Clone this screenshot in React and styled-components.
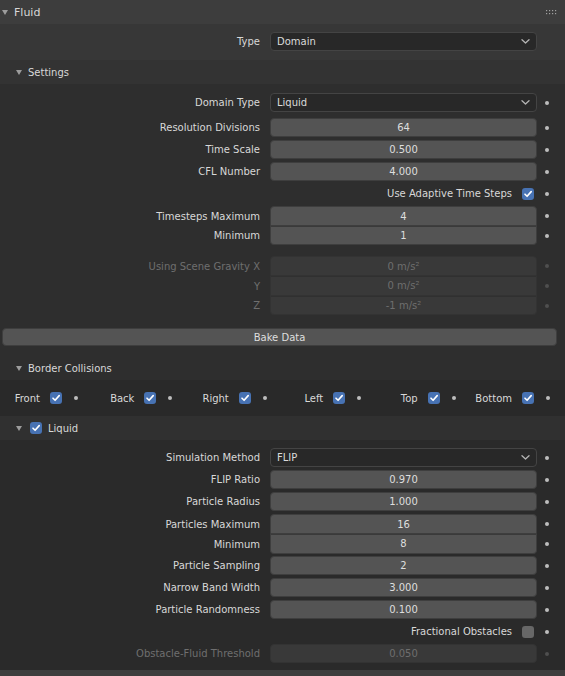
import React from 'react';
import styled, { createGlobalStyle } from 'styled-components';

const Global = createGlobalStyle`
  html, body { margin: 0; padding: 0; background: #2b2b2b; }
  body { font-family: "DejaVu Sans", "Liberation Sans", sans-serif; font-size: 10px; color: #d8d8d8; }
  * { box-sizing: border-box; }
`;

const Panel = styled.div`
  width: 565px;
  height: 676px;
  overflow: hidden;
  display: flex;
  flex-direction: column;
  background: #2b2b2b;
`;

const SectionHeader = styled.div`
  flex: none;
  height: ${p => p.$h || 24}px;
  display: flex;
  align-items: center;
  padding-left: ${p => p.$indent}px;
  padding-top: ${p => p.$pt || 0}px;
  background: ${p => p.$bg};
  font-size: ${p => p.$size || 10}px;
  color: #d8d8d8;
  position: relative;
`;

const HeaderTitle = styled.span`
  display: inline-flex;
  margin-left: ${p => p.$gap}px;
`;

const Section = styled.div`
  flex: none;
  background: ${p => p.$bg};
  padding: ${p => p.$pt || 0}px 0 ${p => p.$pb || 0}px 0;
  display: flex;
  flex-direction: column;
`;

const Grip = styled.svg`
  position: absolute;
  right: 8px;
  top: 10px;
`;

const PropRow = styled.div`
  display: grid;
  grid-template-columns: 1fr 267px 20px;
  padding-right: 8px;
  height: ${p => p.$h || 19}px;
  margin-top: ${p => p.$mt || 0}px;
  align-items: stretch;
`;

const PropLabel = styled.div`
  display: flex;
  align-items: center;
  justify-content: flex-end;
  padding-right: 10px;
  white-space: nowrap;
  color: ${p => (p.$disabled ? '#6f6f6f' : '#d8d8d8')};
`;

const NumField = styled.div`
  display: flex;
  align-items: center;
  justify-content: center;
  background: ${p => (p.$disabled ? '#393939' : '#545454')};
  color: ${p => (p.$disabled ? '#6e6e6e' : '#dedede')};
  border: 1px solid ${p => (p.$disabled ? '#333333' : '#3e3e3e')};
  border-top-width: ${p => (p.$pos === 'mid' || p.$pos === 'bottom' ? 0 : 1)}px;
  border-radius: ${p =>
    p.$pos === 'top' ? '4px 4px 0 0' : p.$pos === 'mid' ? '0' : p.$pos === 'bottom' ? '0 0 4px 4px' : '4px'};
  box-shadow: ${p => (p.$pos === 'mid' || p.$pos === 'bottom' ? `inset 0 1px 0 ${p.$disabled ? '#303030' : '#3a3a3a'}` : 'none')};
`;

const Dropdown = styled.div`
  display: flex;
  align-items: center;
  justify-content: space-between;
  padding: 0 6px 0 6px;
  background: #282828;
  border: 1px solid #444444;
  border-radius: 4px;
  color: #dadada;
`;

const Decorator = styled.div`
  display: flex;
  align-items: center;
  justify-content: center;
  &::after {
    content: '';
    display: ${p => (p.$hidden ? 'none' : 'block')};
    width: 4px;
    height: 4px;
    border-radius: 50%;
    background: ${p => (p.$disabled ? '#4f4f4f' : '#bdbdbd')};
  }
`;

const CheckCell = styled.div`
  display: flex;
  align-items: center;
  justify-content: flex-end;
  gap: 10px;
  padding-right: 3px;
  white-space: nowrap;
`;

const Box = styled.span`
  flex: none;
  width: 12px;
  height: 12px;
  border-radius: 3px;
  background: ${p => (p.$on ? '#4772b3' : '#676767')};
  display: inline-flex;
  align-items: center;
  justify-content: center;
`;

const BakeButton = styled.div`
  margin: 13px 8px 10px 2px;
  height: 18px;
  background: #545454;
  border: 1px solid #3e3e3e;
  border-radius: 4px;
  display: flex;
  align-items: center;
  justify-content: center;
  color: #dedede;
`;

const ToggleGrid = styled.div`
  flex: none;
  height: 36px;
  background: #292929;
  display: grid;
  grid-template-columns: repeat(6, 1fr);
  column-gap: 8.4px;
  padding-right: 7px;
`;

const ToggleCell = styled.div`
  display: flex;
  align-items: center;
`;

const ToggleLabel = styled.span`
  flex: 1;
  text-align: right;
  padding-right: 10px;
  white-space: nowrap;
`;

const ToggleDecor = styled(Decorator)`
  width: 20px;
  height: 100%;
  margin-left: 4px;
`;

const Group = styled.div`
  display: flex;
  flex-direction: column;
  margin-top: ${p => p.$mt || 0}px;
`;

const BottomStrip = styled.div`
  flex: 1;
  background: #3d3d3d;
`;

const Triangle = () => (
  <svg width="6" height="5" viewBox="0 0 6 5">
    <polygon points="0,0 6,0 3,5" fill="#9c9c9c" />
  </svg>
);

const Check = ({ on }) => (
  <Box $on={on}>
    {on && (
      <svg width="10" height="10" viewBox="0 0 10 10">
        <path d="M2 5.2 L4.1 7.3 L8.2 2.6" fill="none" stroke="#ffffff" strokeWidth="1.6" strokeLinecap="round" strokeLinejoin="round" />
      </svg>
    )}
  </Box>
);

const Chevron = () => (
  <svg width="9" height="5" viewBox="0 0 9 5">
    <path d="M1 0.8 L4.5 4 L8 0.8" fill="none" stroke="#b4b4b4" strokeWidth="1.3" strokeLinecap="round" strokeLinejoin="round" />
  </svg>
);

const DropRow = ({ label, value, mt, decor = true }) => (
  <PropRow $mt={mt}>
    <PropLabel>{label}</PropLabel>
    <Dropdown>
      <span>{value}</span>
      <Chevron />
    </Dropdown>
    <Decorator $hidden={!decor} />
  </PropRow>
);

const NumRow = ({ label, value, mt, h, pos, disabled }) => (
  <PropRow $mt={mt} $h={h}>
    <PropLabel $disabled={disabled}>{label}</PropLabel>
    <NumField $pos={pos} $disabled={disabled}>{value}</NumField>
    <Decorator $disabled={disabled} />
  </PropRow>
);

const CheckRow = ({ label, on, mt }) => (
  <PropRow $mt={mt}>
    <div />
    <CheckCell>
      <span>{label}</span>
      <Check on={on} />
    </CheckCell>
    <Decorator />
  </PropRow>
);

const borders = ['Front', 'Back', 'Right', 'Left', 'Top', 'Bottom'];

export default function App() {
  return (
    <Panel>
      <Global />
      <SectionHeader $bg="#3d3d3d" $indent={2} $size={11}>
        <Triangle />
        <HeaderTitle $gap={6}>Fluid</HeaderTitle>
        <Grip width="11" height="5" viewBox="0 0 11 5">
          {[0, 3, 6, 9].map(x => [0, 3].map(y => (
            <rect key={`${x}-${y}`} x={x} y={y} width="1.2" height="1.2" fill="#a0a0a0" />
          )))}
        </Grip>
      </SectionHeader>
      <Section $bg="#373737" $pt={8} $pb={9}>
        <DropRow label="Type" value="Domain" decor={false} />
      </Section>

      <SectionHeader $bg="#333333" $indent={16}>
        <Triangle />
        <HeaderTitle $gap={6}>Settings</HeaderTitle>
      </SectionHeader>
      <Section $bg="#2e2e2e" $pt={9}>
        <DropRow label="Domain Type" value="Liquid" />
        <NumRow label="Resolution Divisions" value="64" mt={6} />
        <NumRow label="Time Scale" value="0.500" mt={3} />
        <NumRow label="CFL Number" value="4.000" mt={3} />
        <CheckRow label="Use Adaptive Time Steps" on mt={3} />
        <Group $mt={3}>
          <NumRow label="Timesteps Maximum" value="4" h={20} pos="top" />
          <NumRow label="Minimum" value="1" h={19} pos="bottom" />
        </Group>
        <Group $mt={11}>
          <NumRow label="Using Scene Gravity X" value="0 m/s²" h={20} pos="top" disabled />
          <NumRow label="Y" value="0 m/s²" h={20} pos="mid" disabled />
          <NumRow label="Z" value="-1 m/s²" h={19} pos="bottom" disabled />
        </Group>
        <BakeButton>Bake Data</BakeButton>
      </Section>

      <SectionHeader $bg="#2e2e2e" $indent={16} $h={24}>
        <Triangle />
        <HeaderTitle $gap={6}>Border Collisions</HeaderTitle>
      </SectionHeader>
      <ToggleGrid>
        {borders.map(b => (
          <ToggleCell key={b}>
            <ToggleLabel>{b}</ToggleLabel>
            <Check on />
            <ToggleDecor />
          </ToggleCell>
        ))}
      </ToggleGrid>

      <SectionHeader $bg="#303030" $indent={16}>
        <Triangle />
        <HeaderTitle $gap={8}><Check on /></HeaderTitle>
        <HeaderTitle $gap={6}>Liquid</HeaderTitle>
      </SectionHeader>
      <Section $bg="#2a2a2a" $pt={8} $pb={7}>
        <DropRow label="Simulation Method" value="FLIP" />
        <NumRow label="FLIP Ratio" value="0.970" mt={3} />
        <NumRow label="Particle Radius" value="1.000" mt={3} />
        <Group $mt={3}>
          <NumRow label="Particles Maximum" value="16" h={20} pos="top" />
          <NumRow label="Minimum" value="8" h={20} pos="bottom" />
        </Group>
        <NumRow label="Particle Sampling" value="2" mt={2} />
        <NumRow label="Narrow Band Width" value="3.000" mt={3} />
        <NumRow label="Particle Randomness" value="0.100" mt={3} />
        <CheckRow label="Fractional Obstacles" on={false} mt={3} />
        <NumRow label="Obstacle-Fluid Threshold" value="0.050" mt={3} disabled />
      </Section>
      <BottomStrip />
    </Panel>
  );
}
